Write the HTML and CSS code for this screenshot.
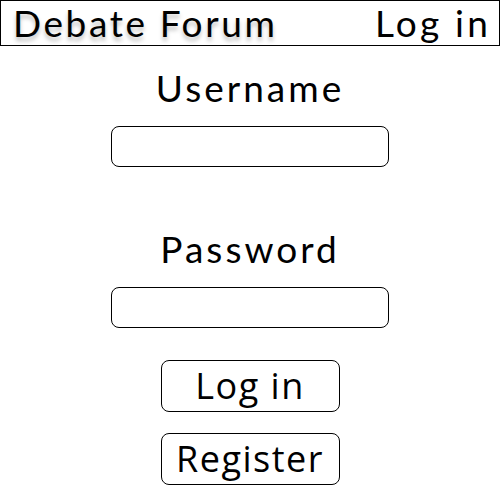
FILE: index.html
```html
<!DOCTYPE html>
<html>
<head>
<meta charset="utf-8">
<link rel="stylesheet" href="styles.css">
</head>
<body>
<header class="topbar">
  <span class="brand">Debate Forum</span>
  <a class="nav-login">Log in</a>
</header>
<main class="login">
  <label class="field-label" for="u">Username</label>
  <input class="field-input" id="u" type="text">
  <label class="field-label pw" for="p">Password</label>
  <input class="field-input" id="p" type="password">
  <button class="btn first">Log in</button>
  <button class="btn">Register</button>
</main>
</body>
</html>
```
FILE: styles.css
```css
html, body {
  margin: 0;
  padding: 0;
  background: #fff;
}
body {
  font-family: "Lato", "Noto Sans", sans-serif;
  font-weight: 400;
  color: #000;
}
.topbar {
  box-sizing: border-box;
  height: 46px;
  border: 1.5px solid #000;
  display: flex;
  align-items: center;
  justify-content: space-between;
  padding: 0 8px 2px 12px;
}
.brand {
  font-size: 37px;
  letter-spacing: 2.6px;
  line-height: 1;
  text-shadow: 0 4px 4px rgba(0,0,0,0.25);
}
.nav-login {
  font-size: 37px;
  letter-spacing: 3.2px;
  line-height: 1;
}
.login {
  display: flex;
  flex-direction: column;
  align-items: center;
}
.field-label {
  font-size: 37px;
  letter-spacing: 3px;
  line-height: 40px;
  margin-top: 22px;
}
.field-label.pw {
  margin-top: 62px;
}
.field-input {
  box-sizing: border-box;
  width: 278px;
  height: 41px;
  margin-top: 18px;
  border: 1px solid #000;
  border-radius: 8px;
  padding: 0 10px;
  font-size: 18px;
  outline: none;
}
.btn {
  box-sizing: border-box;
  width: 179px;
  height: 52px;
  margin-top: 21px;
  border: 1.6px solid #000;
  border-radius: 8px;
  background: #fff;
  font-family: "Open Sans", "Lato", sans-serif;
  font-size: 36px;
  letter-spacing: 1.5px;
  line-height: 1;
  color: #000;
  padding: 0;
}
.btn.first {
  margin-top: 32px;
}
```
